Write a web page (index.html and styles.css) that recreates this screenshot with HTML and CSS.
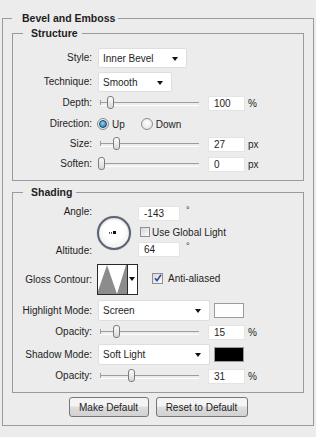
FILE: index.html
```html
<!DOCTYPE html>
<html lang="en">
<head>
  <meta charset="UTF-8" />
  <title>Bevel and Emboss</title>
  <link rel="stylesheet" href="styles.css">
</head>
<body>

  <fieldset class="group outer">
    <legend>Bevel and Emboss</legend>

    <fieldset class="group structure">
      <legend>Structure</legend>

      <div class="row row-tall gap-4">
        <span class="lbl">Style:</span>
        <div class="select select-style">Inner Bevel<i class="arrow"></i></div>
      </div>
      <div class="row row-tall gap-1">
        <span class="lbl">Technique:</span>
        <div class="select select-tech">Smooth<i class="arrow"></i></div>
      </div>
      <div class="row gap-1">
        <span class="lbl">Depth:</span>
        <div class="slider"><i class="thumb" style="left: 9px"></i></div>
        <div class="field">100</div><span class="unit">%</span>
      </div>
      <div class="row">
        <span class="lbl">Direction:</span>
        <span class="radio on"></span><span class="opt">Up</span>
        <span class="radio second"></span><span class="opt">Down</span>
      </div>
      <div class="row">
        <span class="lbl">Size:</span>
        <div class="slider"><i class="thumb" style="left: 15px"></i></div>
        <div class="field">27</div><span class="unit">px</span>
      </div>
      <div class="row">
        <span class="lbl">Soften:</span>
        <div class="slider"><i class="thumb" style="left: 0px"></i></div>
        <div class="field">0</div><span class="unit">px</span>
      </div>
    </fieldset>

    <fieldset class="group shading">
      <legend>Shading</legend>

      <div class="angle-block">
        <div class="lbl lbl-stack"><span>Angle:</span><span>Altitude:</span></div>
        <div class="dial"><i class="dial-tick"></i><i class="dial-dot"></i></div>
        <div class="angle-fields">
          <div class="inline"><div class="field wide">-143</div><span class="deg">°</span></div>
          <div class="inline check-row"><span class="check"></span>Use Global Light</div>
          <div class="inline"><div class="field wide">64</div><span class="deg">°</span></div>
        </div>
      </div>

      <div class="row row-contour">
        <span class="lbl">Gloss Contour:</span>
        <div class="contour">
          <svg class="contour-graph" width="29" height="29" viewBox="0 0 29 29">
            <polygon points="0,29 0,26 9,0 19,29 28,0 29,0 29,29" fill="#8c8c8c" />
          </svg>
          <div class="contour-drop"><i class="arrow"></i></div>
        </div>
        <span class="check checked">
          <svg width="8" height="8" viewBox="0 0 8 8"><path d="M1 4.2 L3 6.6 L7 0.8" fill="none" stroke="#2e4c9c" stroke-width="1.6" /></svg>
        </span>
        <span class="check-label">Anti-aliased</span>
      </div>

      <div class="row row-mode gap-1">
        <span class="lbl">Highlight Mode:</span>
        <div class="select select-mode">Screen<i class="arrow"></i></div>
        <span class="swatch light"></span>
      </div>
      <div class="row gap-2">
        <span class="lbl">Opacity:</span>
        <div class="slider"><i class="thumb" style="left: 15px"></i></div>
        <div class="field">15</div><span class="unit">%</span>
      </div>
      <div class="row row-mode gap-1">
        <span class="lbl">Shadow Mode:</span>
        <div class="select select-mode">Soft Light<i class="arrow"></i></div>
        <span class="swatch dark"></span>
      </div>
      <div class="row">
        <span class="lbl">Opacity:</span>
        <div class="slider"><i class="thumb" style="left: 30px"></i></div>
        <div class="field">31</div><span class="unit">%</span>
      </div>
    </fieldset>

    <div class="buttons">
      <button class="btn btn-make">Make Default</button>
      <button class="btn btn-reset">Reset to Default</button>
    </div>
  </fieldset>

</body>
</html>
```

FILE: styles.css
```css
* { box-sizing: border-box; }
body {
  margin: 0;
  height: 437px;
  background: #ececec;
  font-family: 'Liberation Sans', Arial, sans-serif;
  font-size: 10px;
  color: #1e1e1e;
  overflow: hidden;
}

/* group boxes */
.group {
  margin: 0;
  padding: 0;
  min-width: 0;
  border: 1px solid #9a9a9a;
}

.group legend {
  font-weight: bold;
  font-size: 10.5px;
  line-height: 12px;
  padding: 0 4px 0 8px;
  margin-left: 10px;
}

.outer {
  margin: 12px 2px 0;
  padding: 0 9px 8px;
  height: 414px;
}

.outer > legend {
  margin-left: 0;
  padding: 0 3px 0 10px;
}

.structure {
  margin-top: 3px;
  padding: 9px 0 6px;
}

.shading {
  margin-top: 5px;
  padding: 8px 0 6px;
}

/* rows */
.row {
  display: flex;
  align-items: center;
  height: 20px;
}

.row-tall { height: 20px; }
.gap-1 { margin-bottom: 1px; }
.gap-2 { margin-bottom: 2px; }
.gap-4 { margin-bottom: 4px; }

.lbl {
  width: 79px;
  flex: none;
  text-align: right;
  margin-right: 6px;
  line-height: 12px;
}

/* dropdowns */
.select {
  position: relative;
  height: 20px;
  line-height: 19px;
  padding-left: 4px;
  background: #fff;
  border: 1px solid #dedede;
  border-radius: 2px;
}

.select-style { width: 89px; }
.select-tech { width: 74px; }
.select-mode { width: 112px; height: 21px; line-height: 20px; }

.arrow {
  position: absolute;
  right: 8px;
  top: 8px;
  width: 0;
  height: 0;
  border-left: 3.5px solid transparent;
  border-right: 3.5px solid transparent;
  border-top: 4px solid #111;
}

/* sliders */
.slider {
  position: relative;
  width: 104px;
  height: 20px;
  flex: none;
}

.slider::before {
  content: '';
  position: absolute;
  left: 2px;
  right: 3px;
  top: 9px;
  height: 2px;
  border-top: 1px solid #9d9d9d;
  border-bottom: 1px solid #fff;
}

.slider::after {
  content: '';
  position: absolute;
  left: 2px;
  top: 7px;
  width: 1px;
  height: 5px;
  background: #9d9d9d;
}

.thumb {
  position: absolute;
  top: 3px;
  width: 7px;
  height: 13px;
  border: 1px solid #7c7c7c;
  border-radius: 3px 3px 3px 3px;
  background: linear-gradient(#fbfbfb, #d8d8d8);
  z-index: 1;
}

.field {
  width: 37px;
  height: 15px;
  margin-left: 6px;
  padding-left: 5px;
  line-height: 13px;
  background: #fff;
  border: 1px solid #e4e4e4;
}

.field.wide { width: 42px; margin-left: 0; }

.unit { margin-left: 3px; }

/* radios */
.radio {
  width: 12px;
  height: 12px;
  margin-left: -1px;
  border: 1px solid #8b8d8f;
  border-radius: 50%;
  background: radial-gradient(circle at 50% 40%, #fff, #dcdcdc);
  display: flex;
  align-items: center;
  justify-content: center;
}

.radio.on::after {
  content: '';
  width: 6px;
  height: 6px;
  border-radius: 50%;
  border: 1px solid #123f66;
  background: radial-gradient(circle at 40% 35%, #86d3f6, #1a6fae);
}

.radio.second { margin-left: 16px; }
.opt { margin-left: 3px; }

/* angle */
.angle-block {
  display: flex;
  height: 52px;
  margin-bottom: 6px;
}

.lbl-stack {
  display: flex;
  flex-direction: column;
  justify-content: space-between;
  padding-bottom: 1px;
}

.dial {
  position: relative;
  align-self: center;
  width: 34px;
  height: 34px;
  margin-left: -1px;
  margin-top: 2px;
  border: 2px solid #5b6273;
  border-radius: 50%;
  background: radial-gradient(circle at 50% 40%, #fff 40%, #e6e6e6);
  box-shadow: 0 0 1px #9aa0aa, inset 0 1px 2px rgba(0, 0, 0, 0.15);
}

.dial-dot {
  position: absolute;
  left: 14px;
  top: 13px;
  width: 3px;
  height: 3px;
  background: #111;
}

.dial-tick {
  position: absolute;
  left: 10px;
  top: 14px;
  width: 3px;
  height: 2px;
  border-top: 1px dotted #444;
  border-bottom: 1px dotted #777;
}

.angle-fields {
  display: flex;
  flex-direction: column;
  margin-left: 7px;
}

.inline {
  display: flex;
  align-items: flex-start;
  height: 16px;
}

.deg {
  margin-left: 6px;
  font-size: 9px;
  line-height: 9px;
}

.check-row {
  height: 21px;
  align-items: center;
  padding-left: 2px;
}

.check {
  width: 10px;
  height: 10px;
  flex: none;
  margin-right: 2px;
  border: 1px solid #8f8f8f;
  background: linear-gradient(135deg, #d8d8d8, #fafafa);
  display: flex;
  align-items: center;
  justify-content: center;
}

/* gloss contour */
.row-contour {
  height: 31px;
  margin-bottom: 5px;
}

.contour {
  display: flex;
  width: 41px;
  height: 31px;
  margin-left: -1px;
  border: 1px solid #2a2a2a;
  background: #fff;
}

.contour-graph { display: block; }

.contour-drop {
  position: relative;
  width: 10px;
  border-left: 1px solid #2a2a2a;
}

.contour-drop .arrow {
  right: 2px;
  top: 12px;
}

.check.checked {
  margin-left: 14px;
  width: 11px;
  height: 11px;
  margin-top: -3px;
}

.check-label { margin-left: 3px; margin-top: -3px; }

/* modes */
.row-mode { height: 21px; }

.swatch {
  width: 30px;
  height: 15px;
  margin-left: 4px;
  border: 1px solid #9b9b9b;
}

.swatch.light { background: #fdfdfd; }
.swatch.dark { background: #000; }

/* buttons */
.buttons {
  display: flex;
  justify-content: center;
  gap: 7px;
  margin-top: 4px;
}

.btn {
  height: 20px;
  padding: 0;
  font-family: 'Liberation Sans', Arial, sans-serif;
  font-size: 10px;
  color: #1e1e1e;
  border: 1px solid #767676;
  border-radius: 3px;
  background: linear-gradient(#f4f4f4 45%, #dddddd 50%, #d2d2d2);
}

.btn-make { width: 80px; }
.btn-reset { width: 92px; }
```
